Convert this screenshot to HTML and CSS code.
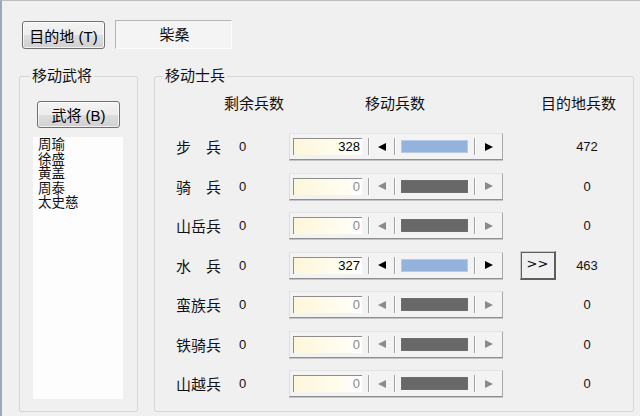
FILE: index.html
```html
<!DOCTYPE html>
<html lang="zh-CN">
<head>
    <meta charset="UTF-8">
    <title>移动</title>
    <link rel="stylesheet" href="styles.css">
</head>
<body>
    <div class="window">
        <div class="top-row">
            <button class="btn btn-dest">目的地 (T)</button>
            <div class="dest-name">柴桑</div>
        </div>

        <div class="groups">
            <!-- 武将 -->
            <fieldset class="group group-generals">
                <legend>移动武将</legend>
                <button class="btn btn-general">武将 (B)</button>
                <div class="general-list">
                    <div>周瑜</div>
                    <div>徐盛</div>
                    <div>黄盖</div>
                    <div>周泰</div>
                    <div>太史慈</div>
                </div>
            </fieldset>

            <!-- 士兵 -->
            <fieldset class="group group-soldiers">
                <legend>移动士兵</legend>
                <div class="head-row">
                    <span class="h-remain">剩余兵数</span>
                    <span class="h-move">移动兵数</span>
                    <span class="h-dest">目的地兵数</span>
                </div>

                <div class="troops">
                    <div class="troop-row">
                        <span class="troop-name">步&emsp;兵</span>
                        <span class="troop-left">0</span>
                        <div class="spin">
                            <div class="spin-field">328</div>
                            <span class="spin-sep"></span>
                            <span class="spin-arrow"><span class="tri-left"></span></span>
                            <span class="spin-sep"></span>
                            <span class="spin-bar"></span>
                            <span class="spin-sep"></span>
                            <span class="spin-arrow"><span class="tri-right"></span></span>
                        </div>
                        <span class="transfer-slot"></span>
                        <span class="troop-dest">472</span>
                    </div>

                    <div class="troop-row off">
                        <span class="troop-name">骑&emsp;兵</span>
                        <span class="troop-left">0</span>
                        <div class="spin">
                            <div class="spin-field">0</div>
                            <span class="spin-sep"></span>
                            <span class="spin-arrow"><span class="tri-left"></span></span>
                            <span class="spin-sep"></span>
                            <span class="spin-bar"></span>
                            <span class="spin-sep"></span>
                            <span class="spin-arrow"><span class="tri-right"></span></span>
                        </div>
                        <span class="transfer-slot"></span>
                        <span class="troop-dest">0</span>
                    </div>

                    <div class="troop-row off">
                        <span class="troop-name">山岳兵</span>
                        <span class="troop-left">0</span>
                        <div class="spin">
                            <div class="spin-field">0</div>
                            <span class="spin-sep"></span>
                            <span class="spin-arrow"><span class="tri-left"></span></span>
                            <span class="spin-sep"></span>
                            <span class="spin-bar"></span>
                            <span class="spin-sep"></span>
                            <span class="spin-arrow"><span class="tri-right"></span></span>
                        </div>
                        <span class="transfer-slot"></span>
                        <span class="troop-dest">0</span>
                    </div>

                    <div class="troop-row">
                        <span class="troop-name">水&emsp;兵</span>
                        <span class="troop-left">0</span>
                        <div class="spin">
                            <div class="spin-field">327</div>
                            <span class="spin-sep"></span>
                            <span class="spin-arrow"><span class="tri-left"></span></span>
                            <span class="spin-sep"></span>
                            <span class="spin-bar"></span>
                            <span class="spin-sep"></span>
                            <span class="spin-arrow"><span class="tri-right"></span></span>
                        </div>
                        <span class="transfer-slot"><button class="btn-transfer">&gt;&gt;</button></span>
                        <span class="troop-dest">463</span>
                    </div>

                    <div class="troop-row off">
                        <span class="troop-name">蛮族兵</span>
                        <span class="troop-left">0</span>
                        <div class="spin">
                            <div class="spin-field">0</div>
                            <span class="spin-sep"></span>
                            <span class="spin-arrow"><span class="tri-left"></span></span>
                            <span class="spin-sep"></span>
                            <span class="spin-bar"></span>
                            <span class="spin-sep"></span>
                            <span class="spin-arrow"><span class="tri-right"></span></span>
                        </div>
                        <span class="transfer-slot"></span>
                        <span class="troop-dest">0</span>
                    </div>

                    <div class="troop-row off">
                        <span class="troop-name">铁骑兵</span>
                        <span class="troop-left">0</span>
                        <div class="spin">
                            <div class="spin-field">0</div>
                            <span class="spin-sep"></span>
                            <span class="spin-arrow"><span class="tri-left"></span></span>
                            <span class="spin-sep"></span>
                            <span class="spin-bar"></span>
                            <span class="spin-sep"></span>
                            <span class="spin-arrow"><span class="tri-right"></span></span>
                        </div>
                        <span class="transfer-slot"></span>
                        <span class="troop-dest">0</span>
                    </div>

                    <div class="troop-row off">
                        <span class="troop-name">山越兵</span>
                        <span class="troop-left">0</span>
                        <div class="spin">
                            <div class="spin-field">0</div>
                            <span class="spin-sep"></span>
                            <span class="spin-arrow"><span class="tri-left"></span></span>
                            <span class="spin-sep"></span>
                            <span class="spin-bar"></span>
                            <span class="spin-sep"></span>
                            <span class="spin-arrow"><span class="tri-right"></span></span>
                        </div>
                        <span class="transfer-slot"></span>
                        <span class="troop-dest">0</span>
                    </div>
                </div>
            </fieldset>
        </div>
    </div>
</body>
</html>
```

FILE: styles.css
```css
* {
    box-sizing: border-box;
}
body {
    margin: 0;
    background-color: #f0f0f0;
    font-family: "Liberation Sans", "Noto Sans CJK SC", sans-serif;
    font-size: 15px;
    color: #111;
}
.window {
    height: 416px;
    border-left: 2px solid #9aa8ba;
    border-top: 1px solid #bcbcbc;
    padding-top: 19px;
    overflow: hidden;
}
.top-row {
    display: flex;
    align-items: flex-start;
    gap: 10px;
    padding-left: 20px;
    height: 29px;
}
.btn {
    font-family: inherit;
    font-size: 15px;
    color: #000;
    padding: 0;
    border: 1px solid #707070;
    border-radius: 3px;
    background: linear-gradient(#f4f4f4 0%, #ececec 50%, #dedede 51%, #d0d0d0 100%);
    box-shadow: inset 0 0 0 1px rgba(255,255,255,0.7);
}
.btn-dest {
    width: 83px;
    height: 28px;
    margin-top: 1px;
}
.dest-name {
    width: 117px;
    height: 29px;
    line-height: 27px;
    text-align: center;
    background-color: #f4f4f4;
    border-top: 1px solid #b4b4b4;
    border-left: 1px solid #b4b4b4;
    border-right: 1px solid #fbfbfb;
    border-bottom: 1px solid #fbfbfb;
    padding-left: 2px;
}
.groups {
    display: flex;
    gap: 16px;
    height: 345px;
    margin-top: 18px;
    padding-left: 17px;
}
.group {
    margin: 0;
    min-width: 0;
    border: 1px solid #d6d6d6;
    border-radius: 2px;
}
.group legend {
    line-height: 18px;
    padding: 0 2px;
}
.group-generals {
    width: 119px;
    padding: 16px 0 0 13px;
}
.group-generals legend {
    margin-left: -3px;
}
.btn-general {
    display: block;
    width: 83px;
    height: 27px;
    margin-left: 4px;
}
.general-list {
    width: 90px;
    height: 262px;
    margin-top: 9px;
    background-color: #fdfdfd;
    padding: 1px 0 0 5px;
    font-size: 13.5px;
    line-height: 14.5px;
}
.group-soldiers {
    width: 480px;
    padding: 10px 0 0 21px;
}
.group-soldiers legend {
    margin-left: -13px;
}
.head-row {
    display: flex;
    line-height: 18px;
    height: 18px;
}
.h-remain {
    margin-left: 48px;
}
.h-move {
    margin-left: 81px;
}
.h-dest {
    margin-left: 116px;
}
.troops {
    margin-top: 14px;
}
.troop-row {
    display: flex;
    align-items: center;
    height: 39.5px;
}
.troop-name {
    width: 62px;
}
.troop-left {
    width: 51px;
    font-size: 13px;
    padding-left: 1px;
}
.spin {
    display: flex;
    align-items: center;
    width: 214px;
    height: 27px;
    background-color: #f3f3f3;
    border: 1px solid;
    border-color: #e4e4e4 #a9a9a9 #8f8f8f #dedede;
    box-shadow: 0 1px 0 #c4c4c4;
}
.spin-field {
    width: 69px;
    height: 17px;
    margin-left: 3px;
    margin-right: 6px;
    border-top: 1px solid #8d8d8d;
    border-left: 1px solid #8d8d8d;
    background: linear-gradient(to right, #fcf6da, #fffdf0 70%, #ffffff);
    text-align: right;
    padding-right: 2px;
    font-size: 13px;
    line-height: 16px;
    color: #000;
}
.spin-sep {
    width: 2px;
    height: 17px;
    border-left: 1px solid #a2a2a2;
    border-right: 1px solid #ffffff;
}
.spin-arrow {
    width: 24px;
    height: 17px;
    display: flex;
    align-items: center;
    justify-content: center;
}
.spin-arrow:last-child {
    flex: 1;
}
.tri-left {
    width: 0;
    height: 0;
    border-top: 4px solid transparent;
    border-bottom: 4px solid transparent;
    border-right: 8px solid #000;
}
.tri-right {
    width: 0;
    height: 0;
    border-top: 4px solid transparent;
    border-bottom: 4px solid transparent;
    border-left: 8px solid #000;
}
.spin-bar {
    width: 67px;
    height: 13px;
    margin-left: 5px;
    margin-right: 6px;
    background-color: #93b2dc;
    border: 1px solid #b4cbe8;
}
.off .spin-field {
    color: #8a8a8a;
}
.off .spin-bar {
    background-color: #686868;
    border-color: #6e6e6e;
}
.off .tri-left {
    border-right-color: #8a8a8a;
}
.off .tri-right {
    border-left-color: #8a8a8a;
}
.transfer-slot {
    width: 36px;
    height: 28px;
    margin-left: 17px;
}
.btn-transfer {
    width: 36px;
    height: 29px;
    padding: 0 0 4px 0;
    font-family: "DejaVu Sans", sans-serif;
    font-size: 13px;
    color: #000;
    background-color: #f0f0f0;
    border-top: 1px solid #c9c9c9;
    border-left: 1px solid #c9c9c9;
    border-right: 2px solid #5e5e5e;
    border-bottom: 2px solid #5e5e5e;
    box-shadow: inset 1px 1px 0 #5e5e5e;
}
.troop-dest {
    width: 62px;
    text-align: center;
    font-size: 13px;
}
```
